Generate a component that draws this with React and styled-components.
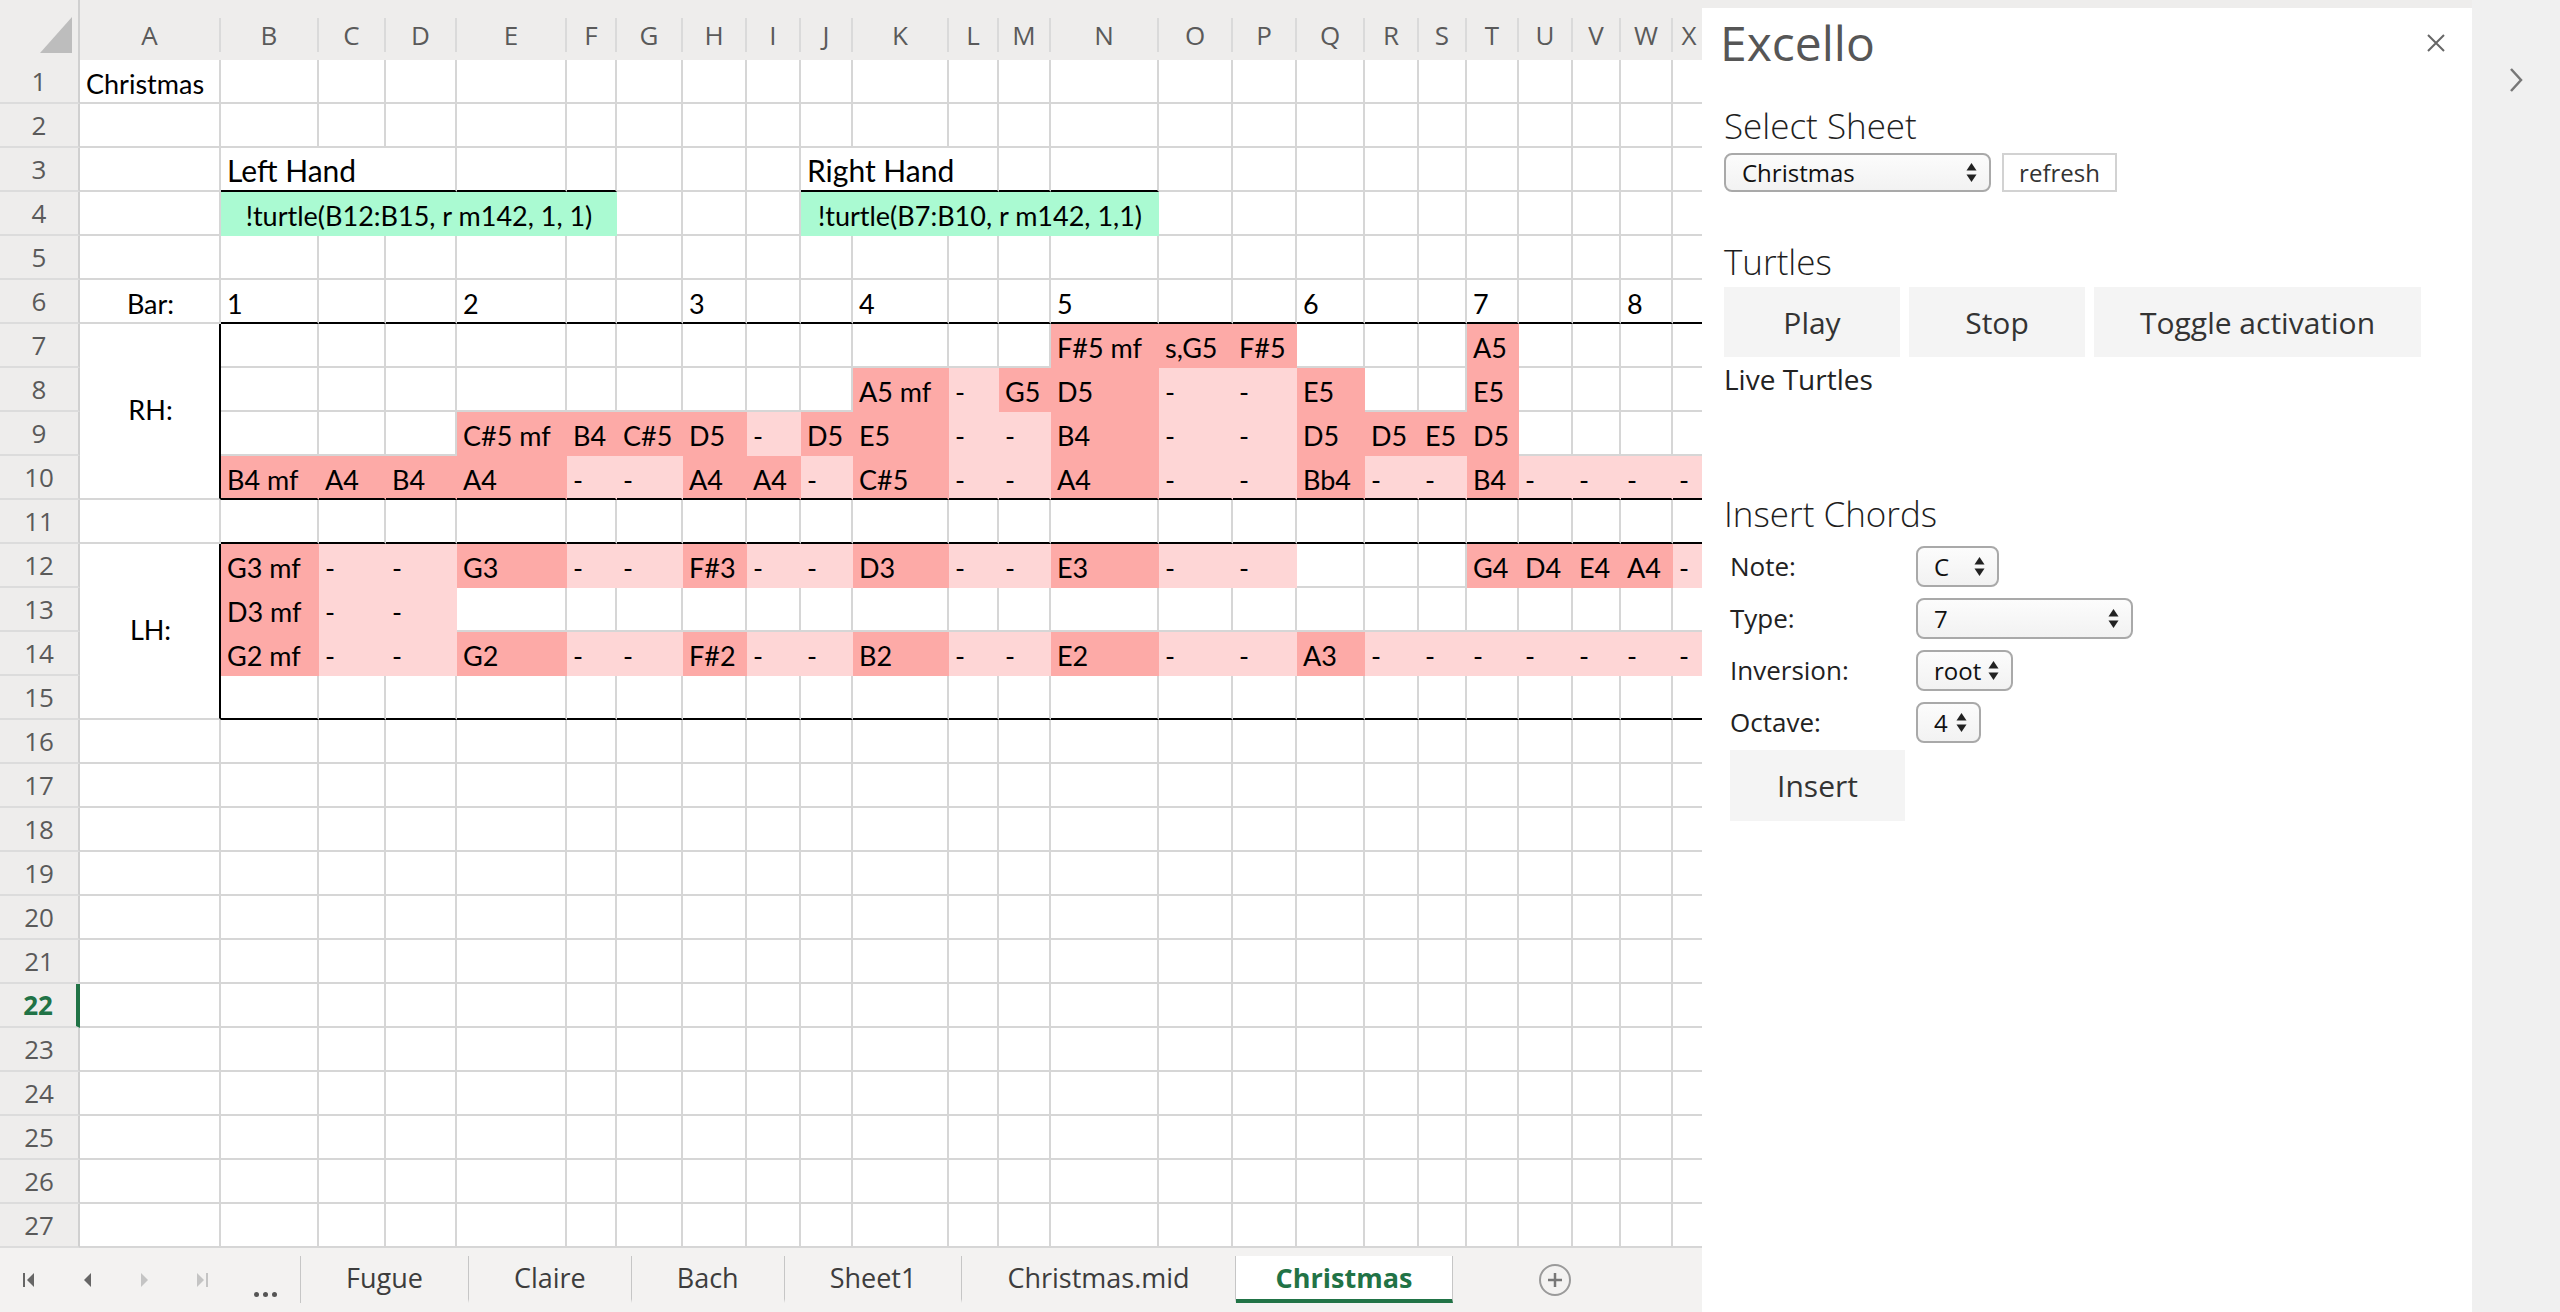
import React from "react";
import styled, { createGlobalStyle } from "styled-components";

const GlobalStyle = createGlobalStyle`
  html, body {
    margin: 0;
    padding: 0;
  }
  body {
    width: 2560px;
    height: 1312px;
    overflow: hidden;
    background: #eeedec;
    font-family: "Open Sans", "Noto Sans", sans-serif;
  }
  * {
    box-sizing: border-box;
  }
`;

const LETTERS = "ABCDEFGHIJKLMNOPQRSTUVWX".split("");
const WIDTHS = [141, 98, 67, 71, 110, 50, 66, 64, 54, 52, 96, 50, 52, 108, 74, 64, 68, 54, 48, 52, 54, 48, 52, 34];
const FILLS = { d: "#fdaaa7", l: "#fed6d6", g: "#aafad2" };
const GRID = "#d6d6d6";
const GREEN = "#217346";

const VALUES = {
  1: { A: "Christmas" },
  6: { B: "1", E: "2", H: "3", K: "4", N: "5", Q: "6", T: "7", W: "8" },
  7: { N: "d:F#5 mf", O: "d:s,G5", P: "d:F#5", T: "d:A5" },
  8: { K: "d:A5 mf", L: "l:-", M: "d:G5", N: "d:D5", O: "l:-", P: "l:-", Q: "d:E5", T: "d:E5" },
  9: {
    E: "d:C#5 mf", F: "d:B4", G: "d:C#5", H: "d:D5", I: "l:-", J: "d:D5", K: "d:E5", L: "l:-",
    M: "l:-", N: "d:B4", O: "l:-", P: "l:-", Q: "d:D5", R: "d:D5", S: "d:E5", T: "d:D5",
  },
  10: {
    B: "d:B4 mf", C: "d:A4", D: "d:B4", E: "d:A4", F: "l:-", G: "l:-", H: "d:A4", I: "d:A4",
    J: "l:-", K: "d:C#5", L: "l:-", M: "l:-", N: "d:A4", O: "l:-", P: "l:-", Q: "d:Bb4",
    R: "l:-", S: "l:-", T: "d:B4", U: "l:-", V: "l:-", W: "l:-", X: "l:-",
  },
  12: {
    B: "d:G3 mf", C: "l:-", D: "l:-", E: "d:G3", F: "l:-", G: "l:-", H: "d:F#3", I: "l:-",
    J: "l:-", K: "d:D3", L: "l:-", M: "l:-", N: "d:E3", O: "l:-", P: "l:-",
    T: "d:G4", U: "d:D4", V: "d:E4", W: "d:A4", X: "l:-",
  },
  13: { B: "d:D3 mf", C: "l:-", D: "l:-" },
  14: {
    B: "d:G2 mf", C: "l:-", D: "l:-", E: "d:G2", F: "l:-", G: "l:-", H: "d:F#2", I: "l:-",
    J: "l:-", K: "d:B2", L: "l:-", M: "l:-", N: "d:E2", O: "l:-", P: "l:-", Q: "d:A3",
    R: "l:-", S: "l:-", T: "l:-", U: "l:-", V: "l:-", W: "l:-", X: "l:-",
  },
};

// cells that span or need their own alignment
const SPECIAL = [
  { r: 3, c: "B", span: 3, text: "Left Hand", size: 30 },
  { r: 3, c: "J", span: 3, text: "Right Hand", size: 30 },
  { r: 4, c: "B", span: 5, text: "!turtle(B12:B15, r m142, 1, 1)", fill: "g", center: true },
  { r: 4, c: "J", span: 5, text: "!turtle(B7:B10, r m142, 1,1)", fill: "g", center: true },
  { r: 6, c: "A", text: "Bar:", center: true },
  { r: 7, c: "A", rowSpan: 4, text: "RH:", center: true, middle: true, thickRight: true },
  { r: 12, c: "A", rowSpan: 4, text: "LH:", center: true, middle: true, thickRight: true },
];

const underlined = (r, ci) =>
  (r === 3 && ((ci >= 1 && ci <= 5) || (ci >= 9 && ci <= 13))) ||
  ([6, 10, 11, 15].includes(r) && ci >= 1);

const TABS = ["Fugue", "Claire", "Bach", "Sheet1", "Christmas.mid", "Christmas"];

const Screen = styled.div`
  display: flex;
  width: 2560px;
  height: 1312px;
  background: #eeedec;
  overflow: hidden;
`;

const Workbook = styled.div`
  width: 1702px;
  flex-shrink: 0;
  display: flex;
  flex-direction: column;
  overflow: hidden;
`;

const Sheet = styled.div`
  display: grid;
  grid-template-columns: 80px ${WIDTHS.map((w) => `${w}px`).join(" ")};
  grid-template-rows: 60px repeat(27, 44px);
  background: #eeedec;
`;

const Corner = styled.div`
  grid-column: 1;
  grid-row: 1;
  display: flex;
  justify-content: flex-end;
  align-items: flex-end;
  padding: 0 6px 7px 0;
  border-right: 2px solid #d0d0d0;
`;

const ColHeader = styled.div`
  grid-row: 1;
  grid-column: ${(p) => p.$col};
  align-self: start;
  margin-top: 18px;
  height: 34px;
  display: flex;
  align-items: center;
  justify-content: center;
  border-right: 2px solid #dadada;
  font: 400 26px "Open Sans", sans-serif;
  color: #5a5a5a;
`;

const RowHeader = styled.div`
  grid-column: 1;
  grid-row: ${(p) => p.$row + 1};
  display: flex;
  align-items: center;
  justify-content: center;
  border-bottom: 2px solid #dcdcdc;
  border-right: ${(p) => (p.$active ? `4px solid ${GREEN}` : "2px solid #d0d0d0")};
  font: ${(p) => (p.$active ? 700 : 400)} 26px "Open Sans", sans-serif;
  color: ${(p) => (p.$active ? GREEN : "#5a5a5a")};
`;

const Cell = styled.div`
  grid-row: ${(p) => p.$row + 1} / span ${(p) => p.$rowSpan || 1};
  grid-column: ${(p) => p.$col} / span ${(p) => p.$span || 1};
  display: flex;
  align-items: ${(p) => (p.$middle ? "center" : "flex-end")};
  justify-content: ${(p) => (p.$center ? "center" : "flex-start")};
  padding: 0 4px 2px 6px;
  background: ${(p) => (p.$fill ? FILLS[p.$fill] : "#fff")};
  border-right: 2px solid ${(p) => (p.$thickRight ? "#000" : p.$fill ? FILLS[p.$fill] : GRID)};
  border-bottom: 2px solid ${(p) => (p.$thickBottom ? "#000" : p.$fill ? FILLS[p.$fill] : GRID)};
  font: 400 ${(p) => p.$size || 27}px/1.2 Lato, "Open Sans", sans-serif;
  color: #000;
  white-space: nowrap;
  overflow: hidden;
`;

const TabBar = styled.div`
  height: 64px;
  display: flex;
  align-items: stretch;
  padding: 8px 0 9px;
  background: #f3f2f1;
  font-family: "Open Sans", sans-serif;
`;

const NavGroup = styled.div`
  width: 301px;
  display: flex;
  align-items: center;
  border-right: 1px solid #c6c6c6;
`;

const NavButton = styled.div`
  width: 58px;
  display: flex;
  justify-content: center;
  color: ${(p) => (p.$disabled ? "#c4c4c4" : "#666")};
`;

const Ellipsis = styled.div`
  width: 69px;
  align-self: flex-end;
  display: flex;
  justify-content: center;
  gap: 4px;
  padding-bottom: 6px;

  span {
    width: 5px;
    height: 5px;
    border-radius: 50%;
    background: #555;
  }
`;

const Tab = styled.div`
  display: flex;
  align-items: center;
  padding: 0 ${(p) => (p.$active ? 40 : 45)}px;
  border-right: 1px solid #c6c6c6;
  border-bottom: 4px solid ${(p) => (p.$active ? GREEN : "transparent")};
  background: ${(p) => (p.$active ? "#fff" : "transparent")};
  font-size: 27px;
  font-weight: ${(p) => (p.$active ? 700 : 400)};
  color: ${(p) => (p.$active ? GREEN : "#3d3d3d")};
  white-space: nowrap;
`;

const AddSheet = styled.div`
  margin-left: 86px;
  align-self: center;
  width: 32px;
  height: 32px;
  border: 2px solid #9a9a9a;
  border-radius: 50%;
  display: flex;
  align-items: center;
  justify-content: center;
  color: #777;
`;

const Panel = styled.aside`
  width: 770px;
  flex-shrink: 0;
  margin-top: 8px;
  padding: 0 26px 0 22px;
  display: flex;
  flex-direction: column;
  align-items: flex-start;
  background: #fff;
  font-family: "Open Sans", sans-serif;
  color: #222;
`;

const PanelHeader = styled.div`
  align-self: stretch;
  height: 57px;
  margin-top: 6px;
  display: flex;
  align-items: center;
  justify-content: space-between;
`;

const Title = styled.h1`
  margin: 0 0 0 -4px;
  font: 400 48px/1.2 "Open Sans", sans-serif;
  color: #565656;
`;

const CloseButton = styled.div`
  display: flex;
  color: #666;
`;

const SectionTitle = styled.h2`
  margin: ${(p) => p.$top}px 0 0;
  font: 300 35px/1.2 "Open Sans", sans-serif;
  color: #1e1e1e;
`;

const SheetRow = styled.div`
  margin-top: 6px;
  display: flex;
  gap: 11px;
`;

const SelectBox = styled.div`
  width: ${(p) => p.$width}px;
  height: ${(p) => p.$height || 41}px;
  display: flex;
  align-items: center;
  justify-content: space-between;
  padding: 0 12px 0 16px;
  border: 2px solid #a9a9a9;
  border-radius: 8px;
  background: linear-gradient(#fcfcfc, #f2f2f2);
  font: 400 24px "Open Sans", sans-serif;
  color: #111;
`;

const RefreshButton = styled.div`
  width: 115px;
  height: 39px;
  display: flex;
  align-items: center;
  justify-content: center;
  border: 2px solid #d2d2d2;
  background: #fff;
  font: 400 24px "Open Sans", sans-serif;
  color: #333;
`;

const ButtonRow = styled.div`
  margin-top: 4px;
  display: flex;
  gap: 9px;
`;

const ActionButton = styled.div`
  height: ${(p) => p.$height || 70}px;
  min-width: ${(p) => p.$minWidth || 176}px;
  padding: 0 46px;
  display: flex;
  align-items: center;
  justify-content: center;
  background: #f4f4f4;
  font: 400 30px "Open Sans", sans-serif;
  color: #333;
  margin-left: ${(p) => p.$indent || 0}px;
  margin-top: ${(p) => p.$top || 0}px;
`;

const Note = styled.div`
  margin-top: 6px;
  font: 400 28px/1.2 "Open Sans", sans-serif;
  color: #222;
`;

const ChordForm = styled.div`
  margin-top: 11px;
  padding-left: 6px;
  display: grid;
  grid-template-columns: 186px auto;
  grid-auto-rows: 41px;
  row-gap: 11px;
  align-items: center;
  justify-items: start;
`;

const FieldLabel = styled.div`
  font: 400 26px "Open Sans", sans-serif;
  color: #222;
`;

const RightStrip = styled.div`
  flex: 1;
  display: flex;
  justify-content: center;
  align-items: flex-start;
  padding-top: 67px;
  background: #f0f0f0;
  color: #777;
`;

const UpDown = () => (
  <svg width="11" height="21" viewBox="0 0 11 21" fill="#222">
    <path d="M0.5 8.5 L5.5 1 L10.5 8.5 Z" />
    <path d="M0.5 12.5 L5.5 20 L10.5 12.5 Z" />
  </svg>
);

const Select = ({ value, width, height }) => (
  <SelectBox $width={width} $height={height}>
    <span>{value}</span>
    <UpDown />
  </SelectBox>
);

const FirstIcon = () => (
  <svg width="12" height="16" viewBox="0 0 12 16" fill="currentColor">
    <rect x="0" y="1" width="2" height="14" />
    <path d="M11 1 L4 8 L11 15 Z" />
  </svg>
);
const PrevIcon = () => (
  <svg width="8" height="16" viewBox="0 0 8 16" fill="currentColor">
    <path d="M8 1 L1 8 L8 15 Z" />
  </svg>
);
const NextIcon = () => (
  <svg width="8" height="16" viewBox="0 0 8 16" fill="currentColor">
    <path d="M0 1 L7 8 L0 15 Z" />
  </svg>
);
const LastIcon = () => (
  <svg width="12" height="16" viewBox="0 0 12 16" fill="currentColor">
    <path d="M1 1 L8 8 L1 15 Z" />
    <rect x="10" y="1" width="2" height="14" />
  </svg>
);

function buildCells() {
  const covered = new Set();
  const starts = {};
  SPECIAL.forEach((m) => {
    const ci = LETTERS.indexOf(m.c);
    starts[`${m.r}-${ci}`] = m;
    for (let dr = 0; dr < (m.rowSpan || 1); dr++)
      for (let dc = 0; dc < (m.span || 1); dc++)
        if (dr || dc) covered.add(`${m.r + dr}-${ci + dc}`);
  });

  const out = [];
  for (let r = 1; r <= 27; r++) {
    out.push(
      <RowHeader key={`h${r}`} $row={r} $active={r === 22}>
        {r}
      </RowHeader>
    );
    LETTERS.forEach((letter, ci) => {
      const key = `${r}-${ci}`;
      if (covered.has(key)) return;
      const m = starts[key];
      if (m) {
        const lastRow = r + (m.rowSpan || 1) - 1;
        out.push(
          <Cell
            key={key}
            $row={r}
            $col={ci + 2}
            $span={m.span}
            $rowSpan={m.rowSpan}
            $fill={m.fill}
            $center={m.center}
            $middle={m.middle}
            $size={m.size}
            $thickRight={m.thickRight}
            $thickBottom={underlined(lastRow, ci)}
          >
            {m.text}
          </Cell>
        );
        return;
      }
      const raw = VALUES[r]?.[letter] || "";
      const [, fill, text] = raw.match(/^(?:([dl]):)?(.*)$/);
      out.push(
        <Cell key={key} $row={r} $col={ci + 2} $fill={fill} $thickBottom={underlined(r, ci)}>
          {text}
        </Cell>
      );
    });
  }
  return out;
}

export default function App() {
  return (
    <>
      <GlobalStyle />
      <Screen>
        <Workbook>
          <Sheet>
            <Corner>
              <svg width="32" height="36" viewBox="0 0 32 36">
                <path d="M32 0 L32 36 L0 36 Z" fill="#bdbdbd" />
              </svg>
            </Corner>
            {LETTERS.map((l, i) => (
              <ColHeader key={l} $col={i + 2}>
                {l}
              </ColHeader>
            ))}
            {buildCells()}
          </Sheet>
          <TabBar>
            <NavGroup>
              <NavButton>
                <FirstIcon />
              </NavButton>
              <NavButton>
                <PrevIcon />
              </NavButton>
              <NavButton $disabled>
                <NextIcon />
              </NavButton>
              <NavButton $disabled>
                <LastIcon />
              </NavButton>
              <Ellipsis>
                <span />
                <span />
                <span />
              </Ellipsis>
            </NavGroup>
            {TABS.map((t) => (
              <Tab key={t} $active={t === "Christmas"}>
                {t}
              </Tab>
            ))}
            <AddSheet>
              <svg width="16" height="16" viewBox="0 0 16 16" stroke="currentColor" strokeWidth="2.5">
                <path d="M8 1 V15 M1 8 H15" />
              </svg>
            </AddSheet>
          </TabBar>
        </Workbook>

        <Panel>
          <PanelHeader>
            <Title>Excello</Title>
            <CloseButton>
              <svg width="20" height="20" viewBox="0 0 20 20" stroke="currentColor" strokeWidth="2">
                <path d="M2 2 L18 18 M18 2 L2 18" />
              </svg>
            </CloseButton>
          </PanelHeader>

          <SectionTitle $top={34}>Select Sheet</SectionTitle>
          <SheetRow>
            <Select value="Christmas" width={267} height={39} />
            <RefreshButton>refresh</RefreshButton>
          </SheetRow>

          <SectionTitle $top={49}>Turtles</SectionTitle>
          <ButtonRow>
            <ActionButton>Play</ActionButton>
            <ActionButton>Stop</ActionButton>
            <ActionButton>Toggle activation</ActionButton>
          </ButtonRow>
          <Note>Live Turtles</Note>

          <SectionTitle $top={96}>Insert Chords</SectionTitle>
          <ChordForm>
            <FieldLabel>Note:</FieldLabel>
            <Select value="C" width={83} />
            <FieldLabel>Type:</FieldLabel>
            <Select value="7" width={217} />
            <FieldLabel>Inversion:</FieldLabel>
            <Select value="root" width={97} />
            <FieldLabel>Octave:</FieldLabel>
            <Select value="4" width={65} />
          </ChordForm>
          <ActionButton $height={71} $minWidth={175} $indent={6} $top={7}>
            Insert
          </ActionButton>
        </Panel>

        <RightStrip>
          <svg width="16" height="26" viewBox="0 0 16 26" fill="none" stroke="currentColor" strokeWidth="2.5">
            <path d="M3 2 L13 13 L3 24" />
          </svg>
        </RightStrip>
      </Screen>
    </>
  );
}
